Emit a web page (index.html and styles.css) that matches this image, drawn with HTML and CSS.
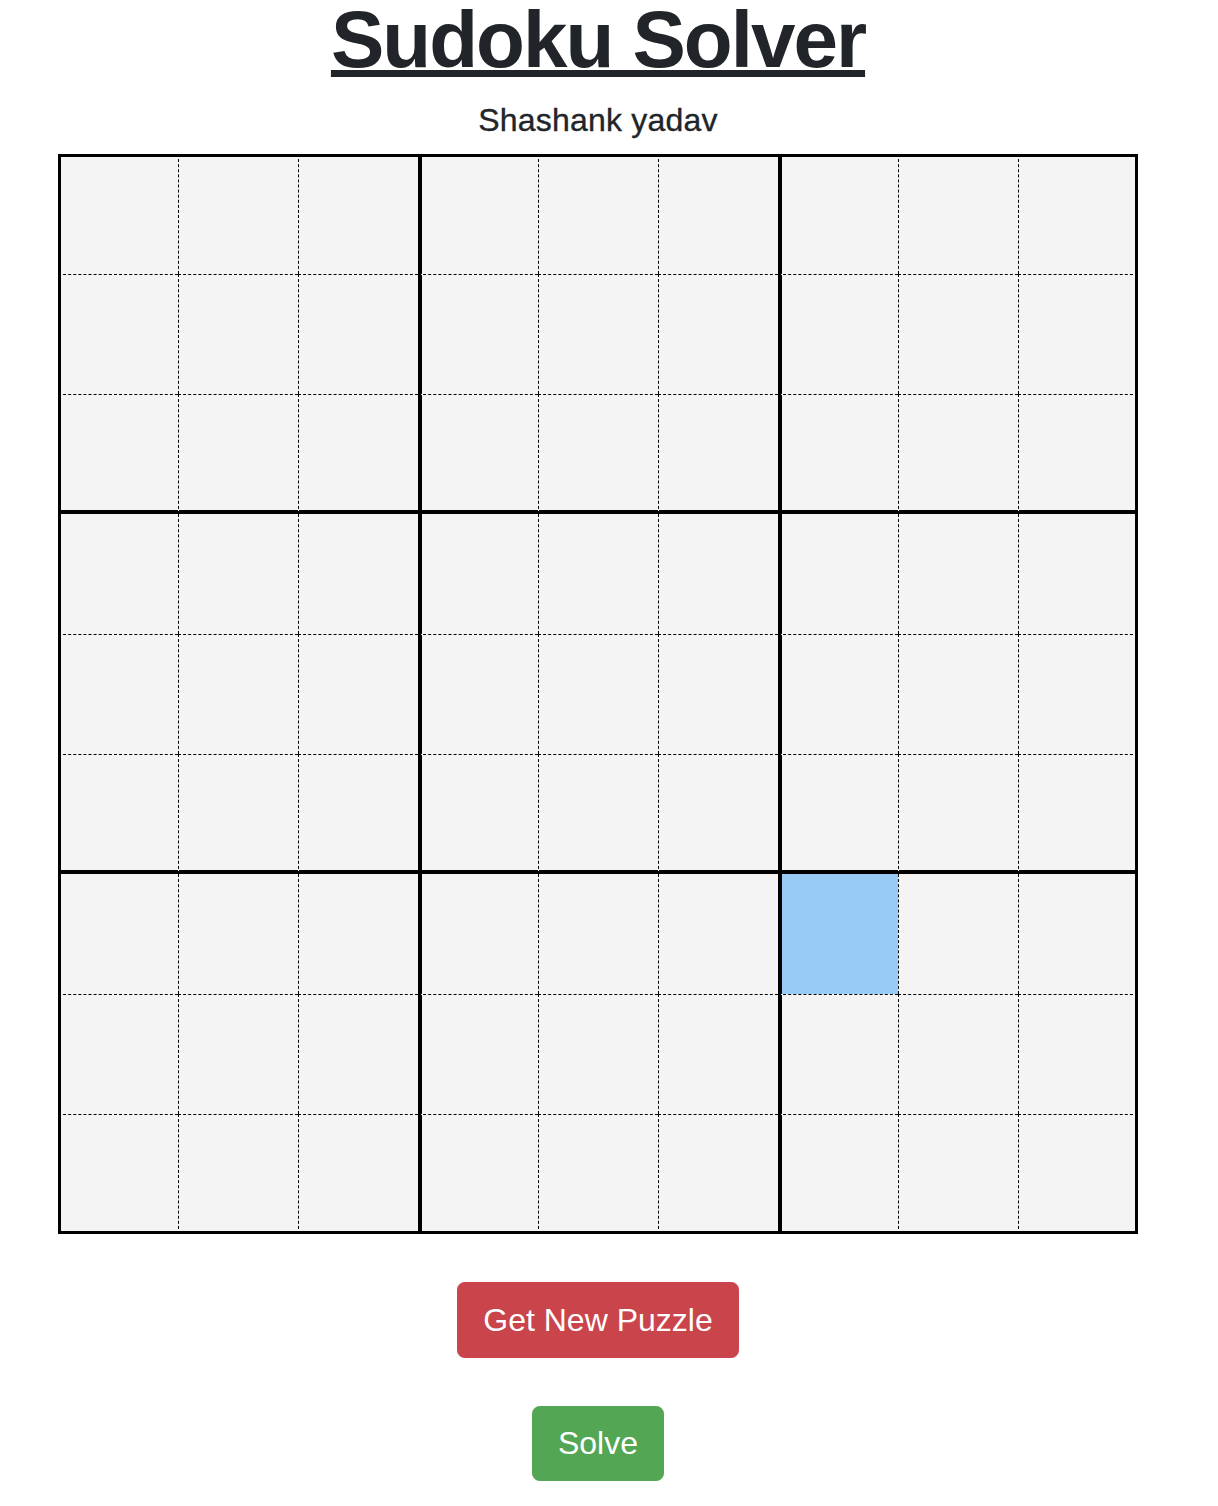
FILE: index.html
```html
<!DOCTYPE html>
<html lang="en">
<head>
<meta charset="utf-8">
<title>Sudoku Solver</title>
<link rel="stylesheet" href="styles.css">
</head>
<body>
<div class="page">
  <h1 class="title">Sudoku Solver</h1>
  <p class="author">Shashank yadav</p>
  <div class="board">
    <div class="cell"></div><div class="cell"></div><div class="cell"></div><div class="cell"></div><div class="cell"></div><div class="cell"></div><div class="cell"></div><div class="cell"></div><div class="cell"></div>
    <div class="cell"></div><div class="cell"></div><div class="cell"></div><div class="cell"></div><div class="cell"></div><div class="cell"></div><div class="cell"></div><div class="cell"></div><div class="cell"></div>
    <div class="cell"></div><div class="cell"></div><div class="cell"></div><div class="cell"></div><div class="cell"></div><div class="cell"></div><div class="cell"></div><div class="cell"></div><div class="cell"></div>
    <div class="cell"></div><div class="cell"></div><div class="cell"></div><div class="cell"></div><div class="cell"></div><div class="cell"></div><div class="cell"></div><div class="cell"></div><div class="cell"></div>
    <div class="cell"></div><div class="cell"></div><div class="cell"></div><div class="cell"></div><div class="cell"></div><div class="cell"></div><div class="cell"></div><div class="cell"></div><div class="cell"></div>
    <div class="cell"></div><div class="cell"></div><div class="cell"></div><div class="cell"></div><div class="cell"></div><div class="cell"></div><div class="cell"></div><div class="cell"></div><div class="cell"></div>
    <div class="cell"></div><div class="cell"></div><div class="cell"></div><div class="cell"></div><div class="cell"></div><div class="cell"></div><div class="cell cell-active"></div><div class="cell"></div><div class="cell"></div>
    <div class="cell"></div><div class="cell"></div><div class="cell"></div><div class="cell"></div><div class="cell"></div><div class="cell"></div><div class="cell"></div><div class="cell"></div><div class="cell"></div>
    <div class="cell"></div><div class="cell"></div><div class="cell"></div><div class="cell"></div><div class="cell"></div><div class="cell"></div><div class="cell"></div><div class="cell"></div><div class="cell"></div>
  </div>
  <div class="actions">
    <button class="btn btn-danger" type="button">Get New Puzzle</button>
    <button class="btn btn-success" type="button">Solve</button>
  </div>
</div>
</body>
</html>
```

FILE: styles.css
```css
html, body {
  margin: 0;
  padding: 0;
  background: #ffffff;
}

body {
  font-family: "Liberation Sans", Arial, Helvetica, sans-serif;
  color: #212529;
}

.page {
  width: 1196px;
  display: flex;
  flex-direction: column;
  align-items: center;
}

.title {
  margin: 0;
  font-size: 80px;
  line-height: 79px;
  font-weight: 700;
  letter-spacing: -2px;
  text-decoration: underline;
  text-decoration-thickness: 7px;
  text-underline-offset: 3px;
  color: #212529;
}

.author {
  margin: 21px 0 0;
  font-size: 32px;
  line-height: 40px;
  letter-spacing: 0.2px;
  color: #212529;
  -webkit-text-stroke: 0.35px #212529;
}

.board {
  margin-top: 14px;
  display: grid;
  grid-template-columns: repeat(9, 120px);
  grid-template-rows: repeat(9, 120px);
}

.cell {
  box-sizing: border-box;
  background: #f4f4f4;
  border-left: 1px dashed #000;
  border-top: 1px dashed #000;
}

.cell:nth-child(9n+1) {
  border-left: 3px solid #000;
}

.cell:nth-child(9n+4),
.cell:nth-child(9n+7) {
  border-left: 4px solid #000;
}

.cell:nth-child(9n) {
  border-right: 3px solid #000;
}

.cell:nth-child(-n+9) {
  border-top: 3px solid #000;
}

.cell:nth-child(n+19):nth-child(-n+27),
.cell:nth-child(n+46):nth-child(-n+54) {
  border-bottom: 4px solid #000;
}

.cell:nth-child(n+28):nth-child(-n+36),
.cell:nth-child(n+55):nth-child(-n+63) {
  border-top: none;
}

.cell:nth-child(n+73) {
  border-bottom: 3px solid #000;
}

.cell-active {
  background: #98cbf5;
}

.actions {
  margin-top: 48px;
  display: flex;
  flex-direction: column;
  align-items: center;
  gap: 48px;
}

.btn {
  font-family: "Liberation Sans", Arial, Helvetica, sans-serif;
  font-size: 32px;
  line-height: 48px;
  padding: 12.8px 25.6px;
  border: 1.6px solid transparent;
  border-radius: 7.7px;
  color: #ffffff;
  cursor: pointer;
}

.btn-danger {
  background: #ca444b;
  border-color: #ca444b;
}

.btn-success {
  background: #53a653;
  border-color: #53a653;
  padding: 12.8px 24.6px;
}
```
